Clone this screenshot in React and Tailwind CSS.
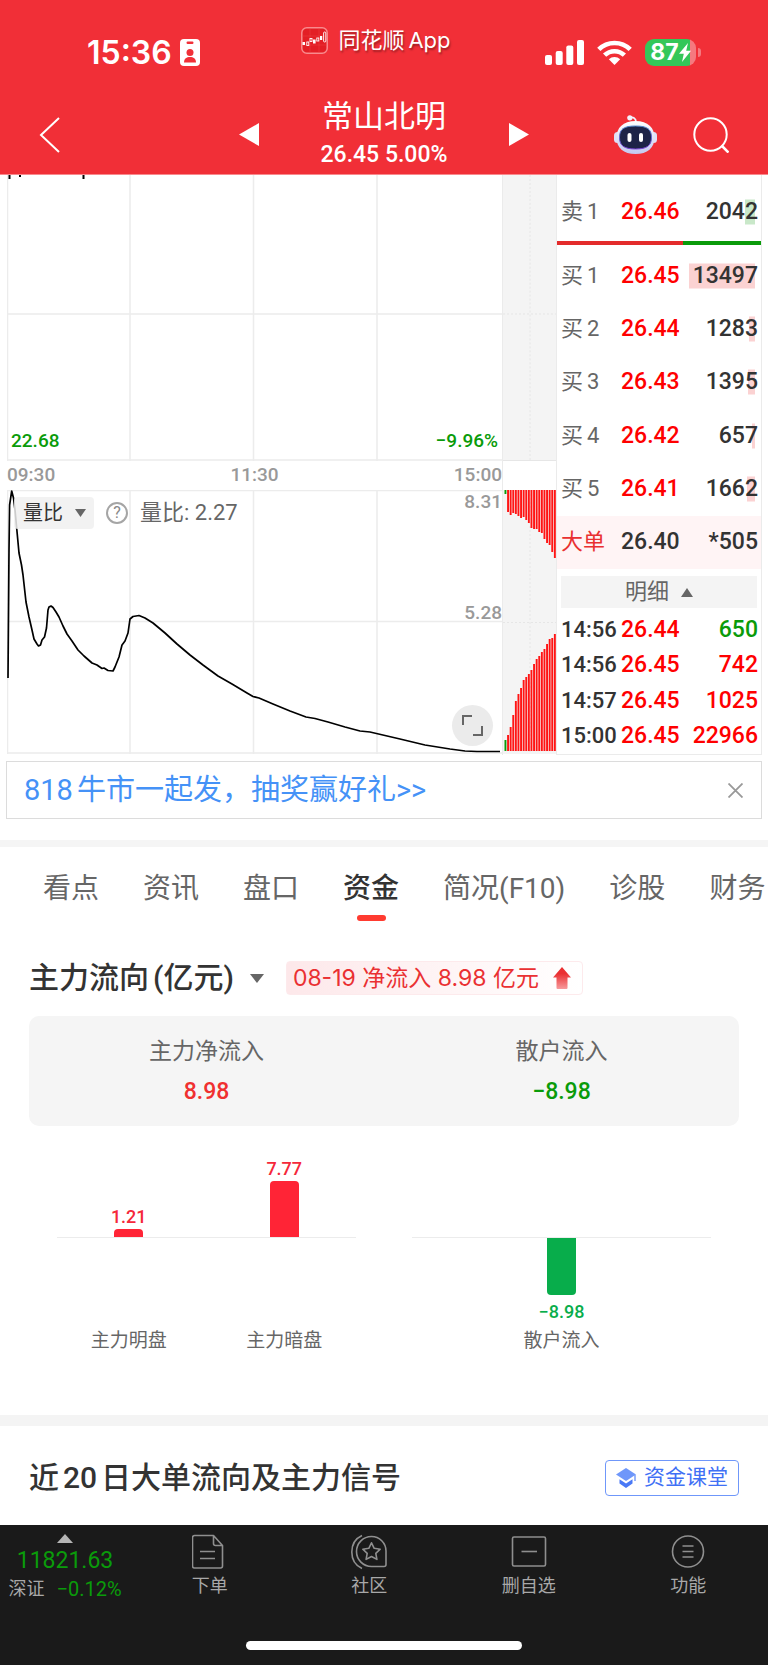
import { useState } from "react";
import clsx from "clsx";

const BIDS = [
  { side: "买", level: "1", price: "26.45", volume: 13497 },
  { side: "买", level: "2", price: "26.44", volume: 1283 },
  { side: "买", level: "3", price: "26.43", volume: 1395 },
  { side: "买", level: "4", price: "26.42", volume: 657 },
  { side: "买", level: "5", price: "26.41", volume: 1662 },
];

const MAX_VOLUME = 13497;

const TRADES = [
  { id: 1, time: "14:56", price: "26.44", volume: "650", down: true },
  { id: 2, time: "14:56", price: "26.45", volume: "742" },
  { id: 3, time: "14:57", price: "26.45", volume: "1025" },
  { id: 4, time: "15:00", price: "26.45", volume: "22966" },
];

const TABS = ["看点", "资讯", "盘口", "资金", "简况(F10)", "诊股", "财务"];

const TOP_BARS = [4, 22, 25, 23, 24, 26, 28, 27, 30, 33, 38, 39, 39, 42, 43, 49, 53, 55, 62, 68];
const BOTTOM_BARS = [11, 16, 24, 36, 50, 57, 63, 71, 74, 77, 81, 87, 92, 95, 99, 102, 107, 112, 113, 117];

const RATIO_POINTS =
  "1,188 2,60 2.6,15 4.7,1 6.5,8 8,20 12,63 14.5,75 16,85 19,112 22,127 25,140 27,149 30,154 31.5,156 33.5,155 35,150 37.5,147 39.5,138 41,120 42,117 44,116 46,117.5 49,122 52,127 56,136 60,144 65,151 71,160 77,166 85,173 90,175 95,178.5 97,178 101,180.5 106,181 108,177 112,167 115,155 118,151 121,143 123,129 126,126.5 132,125.5 138,128 146,133 158,143 170,154 183,165 196,175 211,186 225,194 240,203 246,206.5 252,208 266,214 283,221 299,227 308,228.5 321,232 338,237 353,241 363,242 393,249 418,255 443,259 458,261 470,261.5 493,261.5";

function StatusBar() {
  return (
    <div className="grid h-[95px] grid-cols-[1fr_auto_1fr] items-center pt-[10px]">
      <div className="flex items-center gap-2 pl-[87px]">
        <span className="font-['Inter'] text-[32px] leading-none font-semibold">15:36</span>
        <svg className="h-[27px] w-5" viewBox="0 0 20 27" aria-hidden="true">
          <rect width="20" height="27" rx="4" fill="#fff" />
          <rect x="6.5" y="2.5" width="7" height="2.5" rx="1.2" fill="#f12f37" />
          <circle cx="10" cy="13.5" r="3.5" fill="#f12f37" />
          <path d="M4 23.5c0-3.6 2.6-5.4 6-5.4s6 1.8 6 5.4z" fill="#f12f37" />
        </svg>
      </div>

      <div className="flex items-center gap-[10px] self-start pt-4 pr-4">
        <svg className="size-[27px]" viewBox="0 0 27 27" aria-hidden="true">
          <rect x="0.8" y="0.8" width="25.4" height="25.4" rx="5" fill="#e31e25" stroke="#f98a8d" strokeWidth="1.5" />
          <path d="M1 9h25M1 18h25M9 1v25M18 1v25" stroke="#ee4a4f" strokeWidth="0.4" />
          <g fill="#fff">
            <rect x="1.5" y="15" width="2.5" height="3" />
            <rect x="12" y="12.5" width="2.6" height="4" />
            <rect x="19" y="9" width="2.2" height="4" />
          </g>
          <g fill="none" stroke="#fff" strokeWidth="0.9">
            <rect x="5.8" y="15" width="2" height="3.5" />
            <rect x="9" y="11.5" width="2" height="3" />
            <rect x="15.8" y="11" width="2" height="3" />
            <rect x="22.6" y="5" width="2.2" height="10" rx="1" />
          </g>
        </svg>
        <span className="text-[22px] leading-7 text-shadow-[1px_2px_2px_rgb(0_0_0_/_0.35)]">
          同花顺<span className="ml-1 font-['Inter']">App</span>
        </span>
      </div>

      <div className="flex items-center justify-end gap-[13px] pr-[67px]">
        <svg className="h-[25px] w-[39px]" viewBox="0 0 39 25" fill="#fff" aria-hidden="true">
          <rect y="15" width="7" height="10" rx="2" />
          <rect x="10.7" y="11" width="7" height="14" rx="2" />
          <rect x="21.3" y="5.5" width="7" height="19.5" rx="2" />
          <rect x="32" width="7" height="25" rx="2" />
        </svg>
        <svg className="h-[25px] w-[35px]" viewBox="0 0 35 25" aria-hidden="true">
          <g fill="none" stroke="#fff" strokeWidth="4.6">
            <path d="M1.8 9.4a22.3 22.3 0 0 1 31.4 0" />
            <path d="M7.6 15.2a14.2 14.2 0 0 1 19.8 0" />
          </g>
          <path d="M17.5 25l-5.7-5.7a8.2 8.2 0 0 1 11.4 0z" fill="#fff" />
        </svg>
        <div className="flex items-center gap-[2px]">
          <div className="flex h-[27px] w-[51px] items-center justify-center rounded-[9px] bg-[linear-gradient(90deg,#34c759_88%,#f5797f_88%)]">
            <span className="font-['Inter'] text-[23px] leading-none font-bold">87</span>
            <svg className="h-[19px] w-[12px]" viewBox="0 0 12 19" fill="#fff" aria-hidden="true">
              <path d="M9 0L0 10.800h4.800L3 19l9-11.300H7.200z" />
            </svg>
          </div>
          <div className="h-[9px] w-[3px] rounded-r-full bg-[#f5797f]" />
        </div>
      </div>
    </div>
  );
}

function RobotIcon() {
  return (
    <svg className="h-[40px] w-[43px]" viewBox="0 0 43 40" aria-hidden="true">
      <defs>
        <linearGradient id="shell" x1="0" y1="0" x2="0" y2="1">
          <stop offset="0" stopColor="#ffffff" />
          <stop offset="1" stopColor="#c3c8f0" />
        </linearGradient>
        <linearGradient id="rim" x1="0" y1="0" x2="0" y2="1">
          <stop offset="0" stopColor="#4f86c9" />
          <stop offset="1" stopColor="#7a3fd6" />
        </linearGradient>
      </defs>
      <path d="M15 3c4-1.500 7 0 7 4" fill="none" stroke="#f3f0fb" strokeWidth="1.8" />
      <circle cx="15.8" cy="2.8" r="2.6" fill="#f3f0fb" />
      <rect x="0" y="17" width="7" height="11" rx="3.5" fill="#dfe0f7" />
      <rect x="36" y="17" width="7" height="11" rx="3.5" fill="#dfe0f7" />
      <path d="M21.500 6C34 6 40.500 13 40.500 22.500c0 10.500-7 16.500-19 16.500S2.500 33 2.500 22.500C2.500 13 9 6 21.500 6z" fill="url(#shell)" />
      <path d="M21.500 11c11.500 0 16 3 16 11.500 0 8.500-5 11.500-16 11.500S5.500 31 5.500 22.500C5.500 14 10 11 21.500 11z" fill="#1d2347" stroke="url(#rim)" strokeWidth="1" />
      <rect x="13.500" y="18" width="4" height="9" rx="2" fill="#fff" />
      <rect x="25" y="18" width="4" height="9" rx="2" fill="#fff" />
    </svg>
  );
}

function StockNav() {
  return (
    <nav className="grid h-[80px] grid-cols-[1fr_auto_1fr] items-center border-b border-[#f9898d] px-[39px]">
      <button type="button" aria-label="返回" className="justify-self-start">
        <svg className="h-9 w-[22px]" viewBox="0 0 22 36" fill="none" stroke="#fff" strokeWidth="2" aria-hidden="true">
          <path d="M20 1L2 18l18 17" />
        </svg>
      </button>
      <div className="flex items-center gap-[62px]">
        <button type="button" aria-label="上一只">
          <svg className="h-[23px] w-5" viewBox="0 0 20 23" fill="#fff" aria-hidden="true">
            <path d="M20 0v23L0 11.500z" />
          </svg>
        </button>
        <div className="text-center">
          <h1 className="text-[31px] leading-10 font-normal">常山北明</h1>
          <p className="text-[23px] leading-9 font-medium">26.45 5.00%</p>
        </div>
        <button type="button" aria-label="下一只">
          <svg className="h-[23px] w-5" viewBox="0 0 20 23" fill="#fff" aria-hidden="true">
            <path d="M0 0v23l20-11.500z" />
          </svg>
        </button>
      </div>
      <div className="flex items-center justify-end gap-9">
        <button type="button" aria-label="智能助手">
          <RobotIcon />
        </button>
        <button type="button" aria-label="搜索">
          <svg className="size-9" viewBox="0 0 36 36" fill="none" stroke="#fff" strokeWidth="2" aria-hidden="true">
            <circle cx="17.500" cy="17.500" r="16.200" />
            <path d="M28.500 28.500l7 7" strokeWidth="2.600" />
          </svg>
        </button>
      </div>
    </nav>
  );
}

function PriceChart() {
  return (
    <div className="relative h-[286px]">
      <svg className="h-full w-full" viewBox="0 0 495 286" preserveAspectRatio="none" aria-hidden="true">
        <path d="M0.500 0V286M123 0V286M246.500 0V286M370 0V286M0 139H495M0 285H495" stroke="#ececec" strokeWidth="1.500" fill="none" />
        <path d="M2.500 0v4M13 0v2M76.500 0v4" stroke="#000" strokeWidth="2" />
      </svg>
      <div className="absolute inset-x-1 bottom-2 flex justify-between text-[19px] leading-6 font-medium text-[#0a9b0a]">
        <span>22.68</span>
        <span>−9.96%</span>
      </div>
    </div>
  );
}

function RatioChart() {
  return (
    <div className="relative h-[264px]">
      <svg className="h-full w-full" viewBox="0 0 495 264" preserveAspectRatio="none" aria-hidden="true">
        <path d="M0.500 0V264M123 0V264M246.500 0V264M370 0V264M0 0.500H495M0 131.500H495M0 263H495" stroke="#ececec" strokeWidth="1.500" fill="none" />
        <polyline points={RATIO_POINTS} fill="none" stroke="#000" strokeWidth="1.700" strokeLinejoin="round" />
      </svg>

      <div className="absolute top-[7px] left-[7px] flex items-center text-[20px] leading-8">
        <button type="button" className="flex h-8 items-center gap-3 rounded-sm bg-[#f0f0f0]/85 pr-2 pl-[9px] text-[#333]">
          量比
          <svg className="h-2 w-[11px]" viewBox="0 0 11 8" fill="#666" aria-hidden="true">
            <path d="M0 0h11L5.500 8z" />
          </svg>
        </button>
        <button type="button" aria-label="说明" className="ml-3 flex size-[22px] items-center justify-center rounded-full border-2 border-[#a5a5a5] text-base leading-none text-[#888]">
          ?
        </button>
        <span className="ml-3 text-[22px] text-[#666]">量比: 2.27</span>
      </div>

      <span className="absolute top-0 right-0 text-[19px] leading-6 font-medium text-[#999]">8.31</span>
      <span className="absolute top-[111px] right-0 text-[19px] leading-6 font-medium text-[#999]">5.28</span>

      <button type="button" aria-label="全屏" className="absolute right-[9px] bottom-2 flex size-[41px] items-center justify-center rounded-full bg-[#ebebeb]">
        <svg className="size-[21px]" viewBox="0 0 21 21" fill="none" stroke="#666" strokeWidth="2" aria-hidden="true">
          <path d="M1 10V1h9M20 11v9h-9" />
        </svg>
      </button>
    </div>
  );
}

function DepthStrip() {
  return (
    <div className="flex w-[55px] flex-col border-x border-[#ebebeb]">
      <svg className="h-[286px] w-full border-b border-[#e6e6e6] bg-[#f4f4f4]" viewBox="0 0 53 286" aria-hidden="true">
        <path d="M27 0V286M0 139.500H53" stroke="#e6e6e6" strokeDasharray="2 2" />
      </svg>
      <div className="h-[29px]" />
      <svg className="h-[264px] w-full bg-[#f4f4f4]" viewBox="0 0 53 264" aria-hidden="true">
        <path d="M27 0V264M0 132.500H53" stroke="#e6e6e6" strokeDasharray="2 2" />
        {TOP_BARS.map((height, index) => (
          <rect key={index} x={1.5 + index * 2.6} y="0" width="1.900" height={height} fill={index === 0 ? "#0a9b0a" : "#ff1414"} />
        ))}
        {BOTTOM_BARS.map((height, index) => (
          <rect key={index} x={1.5 + index * 2.6} y={261 - height} width="1.900" height={height} fill={index === 0 ? "#0a9b0a" : "#ff1414"} />
        ))}
      </svg>
    </div>
  );
}

function QuoteRow({ row, sell = false }) {
  return (
    <tr>
      <th scope="row" className="w-16 pl-1 text-left text-[22px] font-normal text-[#666]">
        <span className="flex gap-1">
          <span>{row.side}</span>
          <span>{row.level}</span>
        </span>
      </th>
      <td className="text-[#f00]">{row.price}</td>
      <td className="relative pr-[3px] text-right text-[#333]">
        <span
          className={clsx("absolute top-1/2 right-[6px] h-[25px] -translate-y-1/2", sell ? "bg-[#c9e8c9]" : "bg-[#fbd2d2]")}
          style={{ width: Math.max(3, (row.volume / MAX_VOLUME) * 66) }}
        />
        <span className="relative">{row.volume}</span>
      </td>
    </tr>
  );
}

function OrderBook() {
  return (
    <div className="w-[205px] border-r border-b border-[#ebebeb] text-[23px] leading-7 font-medium">
      <div className="flex h-[66px] flex-col justify-center pt-2">
        <table className="w-full table-fixed">
          <tbody>
            <QuoteRow row={{ side: "卖", level: "1", price: "26.46", volume: 2042 }} sell />
          </tbody>
        </table>
      </div>
      <div className="flex h-1">
        <div className="w-[62%] bg-[#e32b2b]" />
        <div className="flex-1 bg-[#0a9b0a]" />
      </div>
      <table className="mt-1 h-[320px] w-full table-fixed">
        <tbody>
          {BIDS.map((row) => (
            <QuoteRow key={row.level} row={row} />
          ))}
          <tr className="bg-[#fff4f5] text-[#333]">
            <th scope="row" className="w-16 pl-1 text-left text-[22px] font-normal text-[#e93030]">大单</th>
            <td>26.40</td>
            <td className="pr-[3px] text-right">*505</td>
          </tr>
        </tbody>
      </table>
      <div className="px-1 pt-[7px] pb-1">
        <button type="button" className="flex h-8 w-full items-center justify-center gap-3 bg-[#f4f4f4] text-[22px] font-normal text-[#666]">
          明细
          <svg className="h-[9px] w-3" viewBox="0 0 12 9" fill="#666" aria-hidden="true">
            <path d="M6 0l6 9H0z" />
          </svg>
        </button>
      </div>
      <table className="h-[142px] w-full table-fixed">
        <tbody>
          {TRADES.map((trade) => (
            <tr key={trade.id}>
              <td className="w-16 pl-1 text-[22px] text-[#333]">{trade.time}</td>
              <td className="text-[#f00]">{trade.price}</td>
              <td className={clsx("pr-[3px] text-right", trade.down ? "text-[#0a9b0a]" : "text-[#f00]")}>{trade.volume}</td>
            </tr>
          ))}
        </tbody>
      </table>
    </div>
  );
}

function Promo({ onClose }) {
  return (
    <div className="mx-[6px] mt-[6px] flex h-[58px] items-center justify-between border border-[#dcdcdc] pr-[18px] pl-[17px]">
      <a href="#promo" className="text-[29px] leading-10 text-[#4592f7]">
        <span className="mr-1">818</span>牛市一起发，抽奖赢好礼&gt;&gt;
      </a>
      <button type="button" aria-label="关闭" onClick={onClose}>
        <svg className="size-[15px]" viewBox="0 0 15 15" stroke="#999" strokeWidth="1.800" aria-hidden="true">
          <path d="M0.500 0.500l14 14M14.500 0.500l-14 14" />
        </svg>
      </button>
    </div>
  );
}

function Tabs({ active, onChange }) {
  return (
    <div role="tablist" className="flex gap-11 overflow-hidden pt-[22px] pl-[43px]">
      {TABS.map((tab) => (
        <button
          key={tab}
          type="button"
          role="tab"
          aria-selected={tab === active}
          onClick={() => onChange(tab)}
          className={clsx("flex shrink-0 flex-col items-center text-[28px] leading-10", tab === active ? "font-medium text-[#333]" : "text-[#666]")}
        >
          {tab}
          <span className={clsx("mt-[6px] h-[6px] w-[29px] rounded-full", tab === active && "bg-[#ff3b30]")} />
        </button>
      ))}
    </div>
  );
}

function FlowBar({ label, value, height, negative = false }) {
  return (
    <div className="flex flex-1 flex-col items-center">
      <div className="flex h-[88px] flex-col items-center justify-end">
        {!negative && (
          <>
            <span className="mb-[2px] text-lg leading-5 font-medium text-[#f5283a]">{value}</span>
            <div className="w-[29px] rounded-t-[4px] bg-[#ff2436]" style={{ height }} />
          </>
        )}
      </div>
      <div className="flex h-[88px] flex-col items-center">
        {negative && (
          <>
            <div className="w-[29px] rounded-b-[4px] bg-[#08ad4b]" style={{ height }} />
            <span className="mt-[7px] text-lg leading-5 font-medium text-[#08ad4b]">{value}</span>
          </>
        )}
      </div>
      <span className="text-[19px] leading-[30px] text-[#666]">{label}</span>
    </div>
  );
}

function FundFlow() {
  return (
    <section className="px-[29px] pt-[37px]">
      <div className="flex items-center">
        <button type="button" className="flex items-center gap-4 text-[30px] leading-10 font-medium text-[#333]">
          <span>
            主力流向<span className="ml-1">(亿元)</span>
          </span>
          <svg className="h-[9px] w-[14px]" viewBox="0 0 14 9" fill="#666" aria-hidden="true">
            <path d="M0 0h14L7 9z" />
          </svg>
        </button>
        <div className="ml-[22px] flex h-[34px] items-center gap-[14px] rounded-sm border border-[#fdeaec] bg-linear-to-r from-[#fde8ea] to-white pr-[11px] pl-[6px] text-[23px] text-[#ea3032]">
          <span className="font-['Inter','Noto_Sans_CJK_SC',sans-serif]">08-19 净流入 8.98 亿元</span>
          <svg className="h-[22px] w-[18px]" viewBox="0 0 18 22" aria-hidden="true">
            <defs>
              <linearGradient id="rise" x1="0" y1="0" x2="0" y2="1">
                <stop offset="0.300" stopColor="#ea3032" />
                <stop offset="1" stopColor="#f79b9d" />
              </linearGradient>
            </defs>
            <path d="M9 0l9 10.500h-3.500V21a1 1 0 0 1-1 1h-9a1 1 0 0 1-1-1V10.500H0z" fill="url(#rise)" />
          </svg>
        </div>
      </div>

      <dl className="mt-[18px] grid h-[110px] grid-cols-2 rounded-[10px] bg-[#f5f5f5] pt-4 text-center text-[23px] leading-10">
        <div>
          <dt className="text-[#666]">主力净流入</dt>
          <dd className="font-medium text-[#f03030]">8.98</dd>
        </div>
        <div>
          <dt className="text-[#666]">散户流入</dt>
          <dd className="font-medium text-[#0a9b0a]">−8.98</dd>
        </div>
      </dl>

      <div className="grid grid-cols-2 pt-6 pb-[59px]">
        <div className="relative flex px-[22px]">
          <div className="absolute inset-x-7 top-[87px] h-px bg-[#ececec]" />
          <FlowBar label="主力明盘" value="1.21" height={9} />
          <FlowBar label="主力暗盘" value="7.77" height={57} />
        </div>
        <div className="relative flex px-[22px]">
          <div className="absolute inset-x-7 top-[87px] h-px bg-[#ececec]" />
          <FlowBar label="散户流入" value="−8.98" height={57} negative />
        </div>
      </div>
    </section>
  );
}

function NavItem({ label, children }) {
  return (
    <button type="button" className="flex flex-1 flex-col items-center gap-1 pt-[9px] text-lg leading-6 text-[#a8a8a8]">
      <svg className="size-9" viewBox="0 0 36 36" fill="none" stroke="#8f8f8f" strokeWidth="1.600" strokeLinejoin="round" aria-hidden="true">
        {children}
      </svg>
      {label}
    </button>
  );
}

function BottomBar() {
  return (
    <footer className="flex h-[140px] flex-col justify-between bg-[#1a1a1a] pb-[15px]">
      <div className="flex items-start">
        <button type="button" className="flex w-[130px] flex-col items-center pt-[9px]">
          <svg className="h-[9px] w-4" viewBox="0 0 16 9" fill="#b5b5b5" aria-hidden="true">
            <path d="M8 0l8 9H0z" />
          </svg>
          <span className="mt-1 text-[23px] leading-7 text-[#0a9b0a]">11821.63</span>
          <span className="flex items-center gap-3 leading-7">
            <span className="text-lg text-[#a8a8a8]">深证</span>
            <span className="text-xl text-[#0a9b0a]">−0.12%</span>
          </span>
        </button>
        <NavItem label="下单">
          <path d="M21.500 1.500H2.500a2 2 0 0 0-2 2V32a2 2 0 0 0 2 2h26a2 2 0 0 0 2-2V11.500zM21.500 1.500v8a2 2 0 0 0 2 2h7M8 17.500h15M8 24.500h15" />
        </NavItem>
        <NavItem label="社区">
          <path d="M11 1.500C4.500 4.500 0.800 10.500 0.800 18S4.500 31.500 11 34.500" />
          <path d="M20.500 2.500A15 15 0 0 0 20.500 32.500H33a2 2 0 0 0 2-2V17A14.500 14.500 0 0 0 20.500 2.500z" />
          <path d="M20.500 8.800l2.700 5.500 6 .900-4.400 4.200 1.100 6-5.400-2.900-5.400 2.900 1.100-6-4.400-4.200 6-.900z" />
        </NavItem>
        <NavItem label="删自选">
          <rect x="1.500" y="3" width="33" height="29" rx="1.500" />
          <path d="M10.500 17.500h15.500" />
        </NavItem>
        <NavItem label="功能">
          <circle cx="18" cy="17.500" r="15.500" />
          <path d="M12.500 12h11M12.500 17.500h11M12.500 23h11" />
        </NavItem>
      </div>
      <div className="h-[9px] w-[36%] self-center rounded-full bg-white" />
    </footer>
  );
}

export default function App() {
  const [tab, setTab] = useState("资金");
  const [showPromo, setShowPromo] = useState(true);

  return (
    <div className="flex min-h-screen flex-col bg-white font-['Roboto','Noto_Sans_CJK_SC',sans-serif]">
      <header className="bg-[#f12f37] text-white">
        <StatusBar />
        <StockNav />
      </header>

      <main className="flex-1">
        <section className="flex pr-[6px] pl-[7px]">
          <div className="min-w-0 flex-1">
            <PriceChart />
            <div className="flex h-[29px] items-center justify-between text-[19px] font-medium text-[#999]">
              <span>09:30</span>
              <span>11:30</span>
              <span>15:00</span>
            </div>
            <RatioChart />
          </div>
          <DepthStrip />
          <OrderBook />
        </section>

        {showPromo && <Promo onClose={() => setShowPromo(false)} />}

        <div className="mt-[21px] h-[7px] bg-[#f5f5f5]" />
        <Tabs active={tab} onChange={setTab} />
        <FundFlow />

        <div className="h-[11px] bg-[#f4f4f4]" />
        <section className="flex items-center justify-between px-[29px] pt-8 pb-[26px]">
          <h2 className="text-[30px] leading-10 font-medium text-[#333]">
            近<span className="mx-1">20</span>日大单流向及主力信号
          </h2>
          <a href="#course" className="flex h-9 items-center gap-2 rounded-[4px] border border-[#6f97fa] px-[10px] text-[21px] text-[#3f70f5]">
            <svg className="h-5 w-5" viewBox="0 0 20 20" aria-hidden="true">
              <path d="M10 0l10 6.500L10 13 0 6.500z" fill="#6f97fa" />
              <path d="M3.500 11.200L10 15.400l6.500-4.200v4.300L10 20l-6.500-4.500z" fill="#4a79f6" />
              <path d="M19 7v6" stroke="#6f97fa" strokeWidth="1.400" />
            </svg>
            资金课堂
          </a>
        </section>
      </main>

      <BottomBar />
    </div>
  );
}
